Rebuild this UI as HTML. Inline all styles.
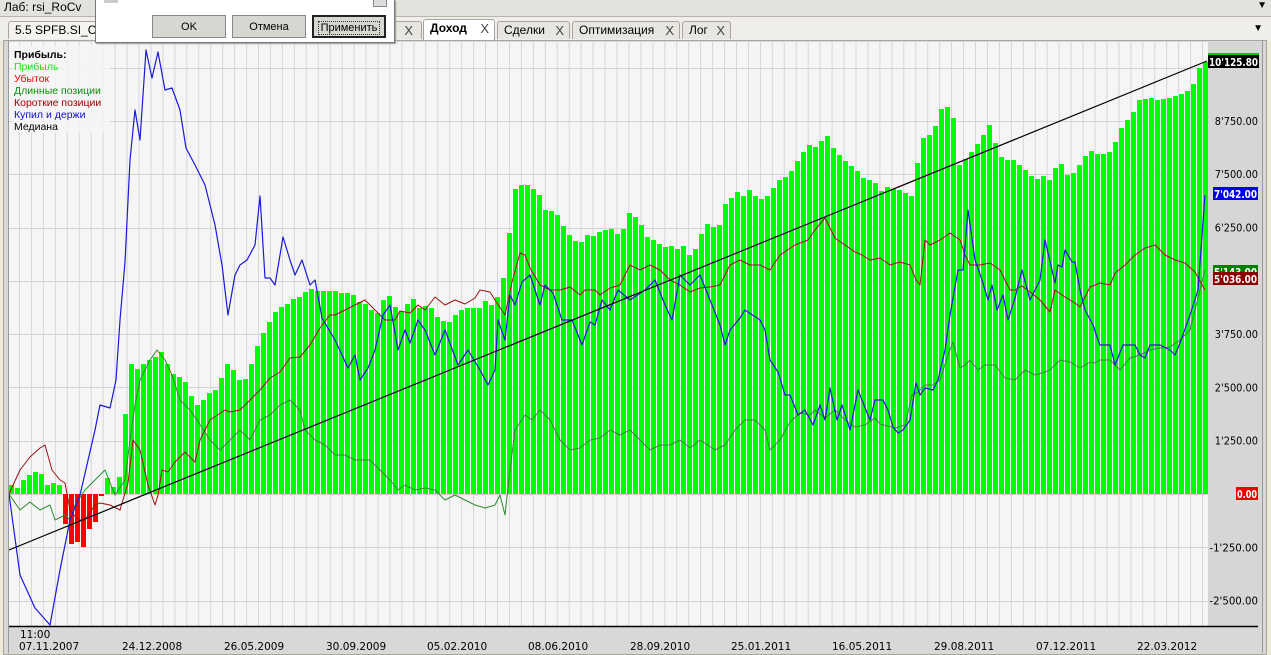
<!DOCTYPE html>
<html><head><meta charset="utf-8">
<style>
html,body{margin:0;padding:0;width:1271px;height:653px;overflow:hidden;background:#ece9d8;font-family:"Liberation Sans","DejaVu Sans",sans-serif;}
#top{position:absolute;left:0;top:0;width:1271px;height:16px;background:#e4e2dc;border-bottom:1px solid #b8b5ad;font-size:12px;}
#tabs{position:absolute;left:0;top:17px;width:1271px;height:24px;background:#efeeea;}
.tab{position:absolute;top:4px;height:18px;border:1px solid #a8a59c;border-bottom:none;background:#e8e6e0;font-size:12px;line-height:17px;padding-left:6px;box-sizing:border-box;border-radius:3px 3px 0 0;}
.tab .x{position:absolute;right:5px;top:0;font-size:13px;color:#444;}
#frame{position:absolute;left:3px;top:40px;width:1262px;height:613px;border:1px solid #a8a59c;background:#d8d8d8;}
svg{position:absolute;left:0;top:0;}
#dlg{position:absolute;left:95px;top:0;width:298px;height:42px;background:#fff;border:1px solid #777;border-top:none;box-shadow:1px 1px 1px #999;}
.btn{position:absolute;top:15px;height:23px;background:#d8d6d0;border:1px solid #888;font-size:11px;text-align:center;line-height:22px;box-sizing:border-box;}
</style></head><body>
<div id="top"><span style="position:absolute;left:4px;top:0;font-size:12px;">Лаб: rsi_RoCv</span><span style="position:absolute;right:4px;top:0;font-size:10px;">▼</span></div>
<div id="tabs">
<div class="tab" style="left:8px;width:100px;background:#f4f3ef">5.5 SPFB.SI_C</div>
<div class="tab" style="left:350px;width:72px;"><span class="x" style="right:8px">X</span></div>
<div class="tab" style="left:423px;width:72px;background:#fff;font-weight:bold;top:2px;height:22px">Доход<span class="x" style="font-weight:normal">X</span></div>
<div class="tab" style="left:497px;width:73px;">Сделки<span class="x">X</span></div>
<div class="tab" style="left:572px;width:108px;">Оптимизация<span class="x">X</span></div>
<div class="tab" style="left:682px;width:49px;">Лог<span class="x">X</span></div>
<span style="position:absolute;right:8px;top:6px;font-size:10px;">▼</span>
</div>
<div id="frame"></div>
<svg id="c" width="1271" height="653" xmlns="http://www.w3.org/2000/svg"></svg>
<div id="dlg">
<div style="position:absolute;left:8px;top:0;width:14px;height:3px;background:#ccc"></div>
<div style="position:absolute;right:7px;top:0;width:12px;height:6px;border:1px solid #888;border-top:none;background:#ddd"></div>
<div class="btn" style="left:56px;width:74px;">OK</div>
<div class="btn" style="left:136px;width:74px;">Отмена</div>
<div class="btn" style="left:216px;width:74px;border:2px solid #222;"><span style="border:1px dotted #333;padding:0 2px">Применить</span></div>
</div>
<script>
const svg=document.getElementById('c');
let h='';
h+='<rect x="9" y="42" width="1199" height="584" fill="#f5f5f5"/>';
h+='<rect x="1208" y="42" width="54" height="584" fill="#d6d6d6"/>';
h+='<rect x="9" y="627" width="1253" height="26" fill="#d8d8d8"/>';
for(let x=19.5;x<1208;x+=11.95)h+=`<line x1="${x}" y1="42" x2="${x}" y2="626" stroke="#d6d6d6" stroke-width="1"/>`;
const Y0=494,S=53.3;
for(let k=-2;k<=8;k++){const y=Math.round(Y0-k*S)+0.5;h+=`<line x1="9" y1="${y}" x2="1208" y2="${y}" stroke="#d4d4d4"/>`;}
const bk=[[9,480],[15,490],[21,485],[27,474],[33,475],[39,468],[45,480],[51,490],[57,475],[63,494],[65,520],[71,545],[77,540],[83,550],[89,530],[95,525],[101,505],[105,470],[111,485],[117,488],[123,465],[129,362],[135,365],[141,372],[147,355],[153,365],[159,348],[165,355],[171,373],[177,375],[183,378],[189,386],[195,405],[201,405],[207,395],[213,390],[219,390],[225,365],[231,362],[237,378],[243,382],[249,375],[255,352],[261,340],[267,325],[273,318],[279,305],[285,308],[291,300],[297,298],[303,295],[309,288],[315,290],[321,292],[327,290],[333,292],[339,290],[345,295],[351,290],[357,300],[363,303],[369,305],[375,315],[381,310],[387,290],[400,314],[413,297],[420,308],[430,305],[440,320],[450,322],[460,310],[470,308],[480,308],[485,300],[495,307],[505,275],[515,190],[520,185],[530,185],[540,195],[545,210],[555,212],[560,217],[565,228],[570,235],[580,245],[590,232],[595,237],[600,232],[610,228],[620,235],[625,228],[630,213],[640,220],[645,232],[650,240],[655,240],[665,248],[670,245],[680,250],[685,245],[690,255],[695,250],[700,245],[705,218],[710,228],[720,225],[725,205],[740,190],[745,198],[750,190],[755,195],[765,200],[780,180],[790,175],[800,157],[810,145],[820,148],[825,130],[835,150],[840,155],[850,165],[860,172],[865,180],[875,180],[880,195],[885,185],[890,188],[900,190],[910,195],[915,198],[920,140],[930,135],[935,130],[940,112],[945,105],[950,108],[955,120],[960,165],[965,160],[970,155],[975,148],[985,133],[990,125],[1000,155],[1005,160],[1015,160],[1020,165],[1030,173],[1035,180],[1040,178],[1045,176],[1050,180],[1060,160],[1065,170],[1070,178],[1080,165],[1090,150],[1100,155],[1110,152],[1115,145],[1120,130],[1130,118],[1135,110],[1140,100],[1150,98],[1160,100],[1170,98],[1180,95],[1190,90],[1195,82],[1202,62]];
function interp(a,x){if(x<=a[0][0])return a[0][1];for(let i=1;i<a.length;i++){if(x<=a[i][0]){const[x0,y0]=a[i-1],[x1,y1]=a[i];return y0+(y1-y0)*(x-x0)/(x1-x0);}}return a[a.length-1][1];}
for(let x=9;x<1207;x+=6){const c=x+3;let t=Math.round(interp(bk,c));const red=c>63&&c<105;if(red){h+=`<rect x="${x}" y="494" width="5" height="${Math.max(0,t-494)}" fill="#ff0000"/>`;}else{h+=`<rect x="${x}" y="${t}" width="5" height="${494-t}" fill="#00ff00"/>`;}}
function pl(pts,col,w){return `<polyline fill="none" stroke="${col}" stroke-width="${w}" stroke-linejoin="round" points="${pts.map(p=>p.join(',')).join(' ')}"/>`;}
const green=[[9,494],[20,510],[30,502],[40,510],[50,505],[55,520],[65,515],[70,520],[75,505],[85,490],[95,480],[105,470],[115,495],[125,480],[130,440],[135,405],[140,380],[150,360],[157,350],[165,360],[172,375],[180,400],[190,410],[197,420],[210,440],[220,450],[230,440],[240,430],[250,440],[260,420],[270,415],[280,405],[290,400],[300,410],[305,430],[315,440],[325,445],[335,455],[345,455],[355,460],[370,460],[380,470],[390,480],[398,490],[405,485],[415,490],[425,488],[435,490],[445,500],[455,495],[465,500],[475,505],[485,508],[495,505],[500,495],[505,515],[510,470],[515,430],[525,415],[532,420],[540,410],[550,420],[560,440],[570,450],[580,448],[590,440],[600,438],[610,430],[620,435],[630,430],[640,440],[650,450],[660,445],[670,445],[680,440],[690,448],[700,440],[715,450],[725,445],[735,430],[745,420],[755,420],[765,430],[770,450],[780,440],[790,422],[800,413],[810,415],[815,410],[825,418],[835,410],[845,420],[855,427],[865,425],[875,418],[880,424],[895,428],[905,425],[912,395],[918,392],[925,385],[933,385],[940,380],[948,355],[953,342],[960,368],[965,365],[970,360],[978,370],[985,365],[995,365],[1005,378],[1015,380],[1025,370],[1035,375],[1045,372],[1050,370],[1060,360],[1070,362],[1080,368],[1090,362],[1095,363],[1100,360],[1110,360],[1120,370],[1130,358],[1140,355],[1150,350],[1160,348],[1170,347],[1180,340],[1190,330],[1200,290],[1205,270]];
const red=[[9,494],[20,470],[30,457],[40,448],[45,445],[52,470],[60,480],[65,483],[70,510],[78,520],[85,520],[95,505],[100,503],[110,505],[120,510],[128,483],[133,440],[140,450],[148,485],[155,505],[158,495],[162,470],[168,472],[175,462],[185,452],[195,462],[200,440],[210,420],[225,410],[230,412],[240,410],[250,400],[260,390],[270,378],[280,372],[290,358],[300,357],[310,345],[320,328],[330,315],[335,315],[345,310],[355,305],[365,300],[375,310],[385,320],[395,320],[400,311],[410,313],[418,305],[425,310],[435,297],[445,305],[455,300],[465,304],[475,298],[480,290],[490,292],[495,300],[505,315],[512,282],[520,253],[525,255],[530,268],[540,285],[550,290],[560,290],[570,287],[580,295],[585,290],[595,290],[600,295],[610,288],[620,285],[625,275],[630,265],[640,270],[650,265],[660,270],[670,280],[680,285],[690,292],[700,288],[710,287],[720,285],[730,265],[740,260],[750,265],[760,265],[770,270],[780,255],[795,245],[808,240],[815,230],[825,218],[835,238],[845,245],[855,252],[862,255],[870,260],[880,258],[890,265],[900,262],[910,265],[916,280],[920,285],[925,240],[930,245],[940,240],[950,233],[960,240],[965,255],[970,265],[980,265],[990,263],[1000,270],[1010,290],[1015,290],[1022,286],[1030,292],[1040,300],[1050,312],[1055,290],[1065,297],[1075,303],[1080,307],[1090,287],[1100,283],[1110,285],[1115,273],[1125,265],[1135,255],[1145,248],[1155,245],[1165,255],[1175,260],[1185,263],[1195,272],[1205,290]];
const blue=[[9,494],[20,575],[35,608],[50,625],[60,570],[70,520],[80,495],[95,430],[100,405],[110,408],[116,380],[120,320],[125,262],[130,160],[135,110],[140,140],[146,50],[152,78],[158,52],[165,90],[172,88],[180,110],[186,148],[195,165],[205,185],[215,225],[222,265],[228,315],[235,275],[240,265],[247,260],[255,245],[260,196],[265,278],[270,278],[275,285],[283,237],[290,260],[295,275],[302,260],[310,285],[315,280],[322,318],[335,340],[348,368],[355,355],[360,380],[368,368],[375,350],[383,315],[390,305],[398,350],[405,330],[410,343],[418,320],[425,330],[435,355],[445,330],[458,365],[468,350],[480,370],[488,385],[495,370],[498,320],[505,340],[510,295],[515,305],[522,282],[530,275],[540,305],[545,285],[553,293],[562,320],[572,320],[582,345],[590,322],[595,325],[602,300],[610,310],[618,290],[630,300],[645,290],[655,280],[665,305],[672,320],[680,275],[690,285],[700,275],[710,300],[720,325],[725,345],[730,330],[740,318],[745,310],[760,320],[765,330],[770,360],[778,372],[785,395],[790,395],[798,415],[805,410],[813,425],[820,405],[825,420],[830,388],[837,420],[842,405],[850,430],[858,390],[870,420],[875,400],[883,400],[888,410],[893,427],[898,433],[903,430],[910,420],[916,383],[920,395],[925,388],[933,390],[938,380],[945,350],[950,315],[958,270],[963,270],[968,210],[975,260],[982,280],[988,300],[992,285],[997,310],[1003,295],[1008,320],[1015,298],[1022,270],[1030,300],[1040,280],[1045,240],[1055,283],[1058,265],[1062,267],[1065,250],[1072,262],[1075,262],[1080,290],[1085,310],[1093,325],[1098,340],[1100,345],[1110,345],[1115,365],[1123,345],[1135,345],[1140,355],[1145,358],[1150,345],[1160,345],[1170,350],[1175,355],[1180,343],[1190,315],[1198,290],[1205,195]];
h+=pl(green,'#2e8b2e',1)+pl(red,'#9b1010',1)+pl(blue,'#1a1ad8',1.2);
h+='<line x1="9" y1="550" x2="1207" y2="61" stroke="#000" stroke-width="1.2"/>';
h+='<line x1="9" y1="626.5" x2="1258" y2="626.5" stroke="#000" stroke-width="1.5"/>';
const lg=[['Прибыль:','#000',1],['Прибыль','#22dd22'],['Убыток','#ee0000'],['Длинные позиции','#108a10'],['Короткие позиции','#a00000'],['Купил и держи','#1010d0'],['Медиана','#000']];
h+='<rect x="12" y="45" width="98" height="88" fill="#f5f5f5" opacity="0.85"/>';
lg.forEach((l,i)=>{h+=`<text x="14" y="${58+i*12}" font-size="10.5" fill="${l[1]}" ${l[2]?'font-weight="bold"':''} font-family="Liberation Sans,DejaVu Sans,sans-serif">${l[0]}</text>`;});
const rl=[[8750,"8'750.00"],[7500,"7'500.00"],[6250,"6'250.00"],[3750,"3'750.00"],[2500,"2'500.00"],[1250,"1'250.00"],[-1250,"-1'250.00"],[-2500,"-2'500.00"]];
rl.forEach(r=>{const y=Y0-r[0]/1250*S;const w=r[1].length*5.4;h+=`<text x="${1258-w}" y="${y+4}" textLength="${w}" lengthAdjust="spacingAndGlyphs" font-size="11" fill="#000" font-family="DejaVu Sans,sans-serif">${r[1]}</text>`;});
function badge(y,txt,bg,w,x){h+=`<rect x="${x}" y="${y-7}" width="${w}" height="13" fill="${bg}"/><text x="${x+1}" y="${y+4}" textLength="${w-2}" lengthAdjust="spacingAndGlyphs" font-size="11" font-weight="bold" fill="#fff" font-family="DejaVu Sans,sans-serif">${txt}</text>`;}
h+='<rect x="1208" y="53" width="51" height="3" fill="#00cc00"/>';
badge(62,"10'125.80",'#000',51,1208);
badge(194,"7'042.00",'#0000ee',45,1213);
badge(272,"5'143.00",'#008000',45,1213);
badge(279,"5'036.00",'#8b0000',45,1213);
badge(494,"0.00",'#ee0000',22,1236);
h+='<text x="20" y="638" font-size="10.5" font-family="DejaVu Sans,sans-serif">11:00</text>';
const dl=[[19,'07.11.2007'],[122,'24.12.2008'],[224,'26.05.2009'],[326,'30.09.2009'],[427,'05.02.2010'],[528,'08.06.2010'],[630,'28.09.2010'],[731,'25.01.2011'],[832,'16.05.2011'],[934,'29.08.2011'],[1036,'07.12.2011'],[1137,'22.03.2012']];
dl.forEach(d=>{h+=`<text x="${d[0]}" y="650" font-size="10.5" font-family="DejaVu Sans,sans-serif">${d[1]}</text>`;});
h+='<line x1="1262.5" y1="40" x2="1262.5" y2="653" stroke="#999"/><line x1="8.5" y1="40" x2="8.5" y2="653" stroke="#999"/>';
svg.innerHTML=h;
</script>
</body></html>
